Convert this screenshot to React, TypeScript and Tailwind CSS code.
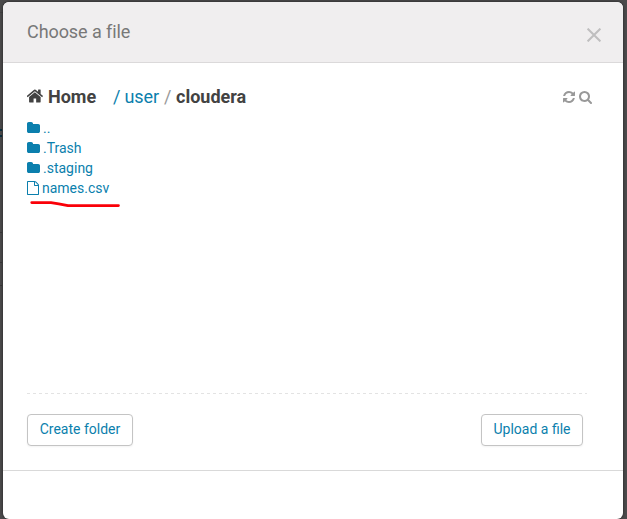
import React from "react";

const ICONS = {
  home: "M1408 992v480q0 26-19 45t-45 19h-384v-384h-256v384h-384q-26 0-45-19t-19-45v-480q0-1 .5-3t.5-3l575-474 575 474q1 2 1 6zm223-69l-62 74q-8 9-21 11h-3q-13 0-21-7l-692-577-692 577q-12 8-24 7-13-2-21-11l-62-74q-8-10-7-23.5t11-21.5l719-599q32-26 76-26t76 26l244 204v-195q0-14 9-23t23-9h192q14 0 23 9t9 23v408l219 182q10 8 11 21.5t-7 23.5z",
  folder: "M1728 608v704q0 92-66 158t-158 66h-1216q-92 0-158-66t-66-158v-960q0-92 66-158t158-66h320q92 0 158 66t66 158v32h672q92 0 158 66t66 158z",
  file: "M1596 380q28 28 48 76t20 88v1152q0 40-28 68t-68 28h-1344q-40 0-68-28t-28-68v-1600q0-40 28-68t68-28h896q40 0 88 20t76 48zm-444-244v376h376q-10-29-22-41l-313-313q-12-12-41-22zm384 1528v-1024h-416q-40 0-68-28t-28-68v-416h-768v1536h1280z",
  refresh: "M1639 1056q0 5-1 7-64 268-268 434.5t-478 166.5q-146 0-282.5-55t-243.5-157l-129 129q-19 19-45 19t-45-19-19-45v-448q0-26 19-45t45-19h448q26 0 45 19t19 45-19 45l-137 137q71 66 161 102t187 36q134 0 250-65t186-179q11-17 53-117 8-23 30-23h192q13 0 22.5 9.5t9.5 22.5zm25-800v448q0 26-19 45t-45 19h-448q-26 0-45-19t-19-45 19-45l138-138q-148-137-349-137-134 0-250 65t-186 179q-11 17-53 117-8 23-30 23h-199q-13 0-22.5-9.5t-9.5-22.5v-7q65-268 270-434.5t480-166.5q146 0 284 55.5t245 156.5l130-129q19-19 45-19t45 19 19 45z",
  search: "M1216 832q0-185-131.5-316.5t-316.5-131.5-316.5 131.5-131.5 316.5 131.5 316.5 316.5 131.5 316.5-131.5 131.5-316.5zm512 832q0 52-38 90t-90 38q-54 0-90-38l-343-342q-179 124-399 124-143 0-273.5-55.5t-225-150-150-225-55.5-273.5 55.5-273.5 150-225 225-150 273.5-55.5 273.5 55.5 225 150 150 225 55.5 273.5q0 220-124 399l343 343q37 37 37 90z",
};

function Icon({ name, box, className }: { name: keyof typeof ICONS; box: string; className: string }) {
  return (
    <svg viewBox={box} fill="currentColor" aria-hidden="true" className={`shrink-0 ${className}`}>
      <path d={ICONS[name]} />
    </svg>
  );
}

const entries = [
  { name: "..", folder: true },
  { name: ".Trash", folder: true },
  { name: ".staging", folder: true },
  { name: "names.csv", folder: false },
];

function Entry({ name, folder }: { name: string; folder: boolean }) {
  return (
    <li className="flex h-5 items-center">
      {folder ? (
        <Icon name="folder" box="64 0 1664 1792" className="mr-[3px] h-[14px] w-[13px]" />
      ) : (
        <Icon name="file" box="128 0 1536 1792" className="mr-[3px] h-[14px] w-[12px]" />
      )}
      <a href="#">{name}</a>
    </li>
  );
}

/* Slivers of the dimmed page that stay visible left of the dialog. */
function BackdropEdge() {
  return (
    <div className="flex w-[3px] shrink-0 flex-col">
      <div className="mt-[10px] h-px bg-[#424142]" />
      <div className="mt-[116px] h-[2px] w-[2px] bg-[#0b2d3d]" />
      <div className="mt-[4px] h-[2px] w-[2px] bg-[#0b2d3d]" />
      <div className="mt-[95px] h-px w-[2px] bg-[#393839]" />
      <div className="mt-[29px] h-px w-[2px] bg-[#393839]" />
      <div className="mt-[22px] h-px w-[2px] bg-[#393839]" />
    </div>
  );
}

const buttonClass =
  "h-8 rounded-[4px] border border-[#c4c4c4] bg-white pb-0.5 text-[14px] leading-5 text-[#0b7fad] shadow-[0_1px_2px_rgba(0,0,0,0.05)]";

export default function App() {
  return (
    <div className="flex h-[519px] w-[627px] overflow-hidden bg-[#4b4a4b] pt-[2px] font-[Roboto,sans-serif] text-[14px] text-[#424242]">
      <BackdropEdge />
      <div className="flex h-[517px] w-[620px] flex-col overflow-hidden rounded-[6px] bg-white shadow-[0_0_3px_rgba(0,0,0,0.6)]">
        <header className="flex h-[61px] shrink-0 items-center justify-between border-b border-[#dbd9da] bg-[#f0eeef] pr-[22px] pl-6">
          <h3 className="text-[18px] leading-7 tracking-[-0.08px] text-[#787878]">Choose a file</h3>
          <button aria-label="Close" className="mt-[5px] text-[#bfbebf]">
            <svg viewBox="0 0 14 14" className="h-[14px] w-[14px]" stroke="currentColor" strokeWidth="2">
              <path d="M.6.6 13.4 13.4M13.4.6.6 13.4" />
            </svg>
          </button>
        </header>

        <main className="flex h-[408px] shrink-0 flex-col border-b border-[#d9d9d9] px-6">
          <nav className="mt-[19px] flex h-7 items-center text-[18px]">
            <Icon name="home" box="89 0 1612 1792" className="h-[18px] w-[17px]" />
            <span className="ml-[4px] w-[65px] font-bold">Home</span>
            <a href="#" className="w-[51px] tracking-[-0.15px] text-[#0b7fad]">/ user</a>
            <span className="w-3 text-[#999]">/</span>
            <span className="font-bold">cloudera</span>
            <span className="mt-[2px] mr-[7px] ml-auto flex items-center gap-[4px] text-[#999]">
              <Icon name="refresh" box="128 0 1536 1792" className="h-[14px] w-[12px]" />
              <Icon name="search" box="64 0 1664 1792" className="h-[14px] w-[13px]" />
            </span>
          </nav>
          <ul className="mt-[8px] text-[#0b7fad]">
            {entries.map((e) => (
              <Entry key={e.name} name={e.name} folder={e.folder} />
            ))}
          </ul>
          <svg viewBox="0 0 92 10" className="mt-[2px] ml-[2px] h-[10px] w-[92px] shrink-0" fill="none" stroke="#fa0008" strokeWidth="2.7" strokeLinecap="round" strokeLinejoin="round">
            <path d="M2.7 2.6H22Q29 3.6 39 5.6H89.5" />
          </svg>
          <div className="mt-auto mb-[20px] h-px w-[560px] bg-[repeating-linear-gradient(90deg,#e3e3e3_0_3px,transparent_3px_6px)]" />
          <div className="mb-[24px] flex justify-between pr-4">
            <button className={`w-[106px] ${buttonClass}`}>Create folder</button>
            <button className={`w-[102px] ${buttonClass}`}>Upload a file</button>
          </div>
        </main>
      </div>
    </div>
  );
}
